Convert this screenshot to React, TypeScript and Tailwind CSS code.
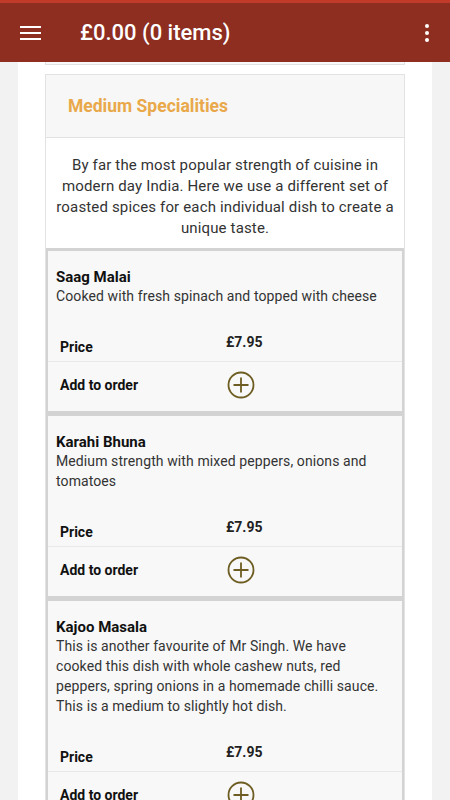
const items = [
  {
    name: "Saag Malai",
    desc: "Cooked with fresh spinach and topped with cheese",
    price: "£7.95",
  },
  {
    name: "Karahi Bhuna",
    desc: "Medium strength with mixed peppers, onions and tomatoes",
    price: "£7.95",
  },
  {
    name: "Kajoo Masala",
    desc: "This is another favourite of Mr Singh. We have cooked this dish with whole cashew nuts, red peppers, spring onions in a homemade chilli sauce. This is a medium to slightly hot dish.",
    price: "£7.95",
  },
];

function PlusCircle() {
  return (
    <svg width="28" height="28" viewBox="0 0 28 28" fill="none" stroke="#6e5d22" strokeWidth="1.8">
      <circle cx="14" cy="14" r="12.5" />
      <path d="M14 6.5v15M6.5 14h15" />
    </svg>
  );
}

function ItemCard({ name, desc, price }: { name: string; desc: string; price: string }) {
  return (
    <div className="border-2 border-t-[3px] border-[#d3d3d3] bg-[#f8f8f8]">
      <div className="pl-[8px] pr-[20px] pt-[17px] pb-[29px]">
        <div className="text-[15px] font-bold leading-[18px] text-[#111]">{name}</div>
        <div className="text-[14px] leading-[20px] tracking-[0.1px] text-[#333]">{desc}</div>
      </div>
      <div className="grid grid-cols-[166px_1fr] border-b border-[#e8e8e8] px-[12px] pb-[4px]">
        <div className="pt-[2px] text-[14px] font-bold leading-[20px] text-[#111]">Price</div>
        <div className="-mt-[3px] text-[14px] font-bold leading-[20px] text-[#222]">{price}</div>
      </div>
      <div className="grid grid-cols-[166px_1fr] items-center px-[12px] pt-[9px] pb-[12px]">
        <div className="text-[14px] font-bold text-[#111]">Add to order</div>
        <div className="pl-[1px]">
          <PlusCircle />
        </div>
      </div>
    </div>
  );
}

export default function App() {
  return (
    <div className="h-[800px] overflow-hidden bg-[#f2f2f2] font-['Roboto',sans-serif]">
      <header className="flex h-[62px] items-center border-t-[3px] border-[#c23a2a] bg-[#8d2e20] text-white">
        <div className="ml-[20px] flex w-[21px] flex-col gap-[4px]">
          <span className="h-[2px] bg-white" />
          <span className="h-[2px] bg-white" />
          <span className="h-[2px] bg-white" />
        </div>
        <div className="ml-[39px] text-[22px] font-medium">£0.00 (0 items)</div>
        <div className="ml-auto mr-[21px] flex flex-col gap-[3px]">
          <span className="h-[4px] w-[4px] rounded-full bg-white" />
          <span className="h-[4px] w-[4px] rounded-full bg-white" />
          <span className="h-[4px] w-[4px] rounded-full bg-white" />
        </div>
      </header>
      <main className="mx-[18px] h-full bg-white px-[27px]">
        <div className="h-[3px] border-x border-b border-[#e2e2e2] bg-[#f8f8f8]" />
        <section className="mt-[9px] border border-[#e2e2e2]">
          <h2 className="flex h-[62px] items-center bg-[#f7f7f7] px-[22px] text-[17.5px] font-bold text-[#e9a84a]">
            Medium Specialities
          </h2>
          <p className="border-t border-[#e2e2e2] px-[10px] pt-[17px] pb-[9px] text-center text-[15px] leading-[21px] tracking-[0.15px] text-[#333]">
            By far the most popular strength of cuisine in modern day India. Here we use a different set of
            roasted spices for each individual dish to create a unique taste.
          </p>
          <div className="flex flex-col">
            {items.map((item) => (
              <ItemCard key={item.name} {...item} />
            ))}
          </div>
        </section>
      </main>
    </div>
  );
}
